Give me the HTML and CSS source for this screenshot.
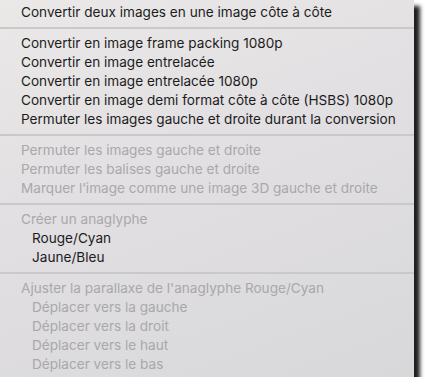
FILE: index.html
```html
<!DOCTYPE html>
<html lang="fr">
<head>
    <meta charset="UTF-8">
    <meta name="viewport" content="width=device-width, initial-scale=1.0">
    <title>Menu 3D</title>
    <link rel="stylesheet" href="styles.css">
</head>
<body>
    <div class="menu">
        <ul class="group">
            <li class="item">Convertir deux images en une image côte à côte</li>
        </ul>
        <div class="separator"></div>
        <ul class="group">
            <li class="item">Convertir en image frame packing 1080p</li>
            <li class="item">Convertir en image entrelacée</li>
            <li class="item">Convertir en image entrelacée 1080p</li>
            <li class="item">Convertir en image demi format côte à côte (HSBS) 1080p</li>
            <li class="item">Permuter les images gauche et droite durant la conversion</li>
        </ul>
        <div class="separator"></div>
        <ul class="group">
            <li class="item disabled">Permuter les images gauche et droite</li>
            <li class="item disabled">Permuter les balises gauche et droite</li>
            <li class="item disabled">Marquer l’image comme une image 3D gauche et droite</li>
        </ul>
        <div class="separator"></div>
        <ul class="group">
            <li class="item disabled">Créer un anaglyphe</li>
            <li class="item sub">Rouge/Cyan</li>
            <li class="item sub">Jaune/Bleu</li>
        </ul>
        <div class="separator"></div>
        <ul class="group">
            <li class="item disabled">Ajuster la parallaxe de l'anaglyphe Rouge/Cyan</li>
            <li class="item sub disabled">Déplacer vers la gauche</li>
            <li class="item sub disabled">Déplacer vers la droit</li>
            <li class="item sub disabled">Déplacer vers le haut</li>
            <li class="item sub disabled">Déplacer vers le bas</li>
        </ul>
    </div>
</body>
</html>
```

FILE: styles.css
```css
/* Page */
html, body {
    margin: 0;
    padding: 0;
    background: #fff;
}

/* Menu panel */
.menu {
    width: 414px;
    padding: 3px 0 3px;
    box-sizing: border-box;
    background: linear-gradient(160deg, #ebe8e8 0%, #e2e0e2 40%, #d8d7da 100%);
    box-shadow: 6px 6px 4px rgba(0, 0, 0, 0.88);
    font-family: "Inter", "Roboto", sans-serif;
    font-size: 13.6px;
    color: #1c1c1c;
}

.group {
    list-style: none;
    margin: 0;
    padding: 0;
}

/* Menu items */
.item {
    height: 19px;
    line-height: 19px;
    padding-left: 21px;
    white-space: nowrap;
}

.item.sub {
    padding-left: 32px;
}

.item.disabled {
    color: #a9a8aa;
}

/* Separator line */
.separator {
    height: 2px;
    margin: 5px 0;
    background: #c9c8cb;
}
```
